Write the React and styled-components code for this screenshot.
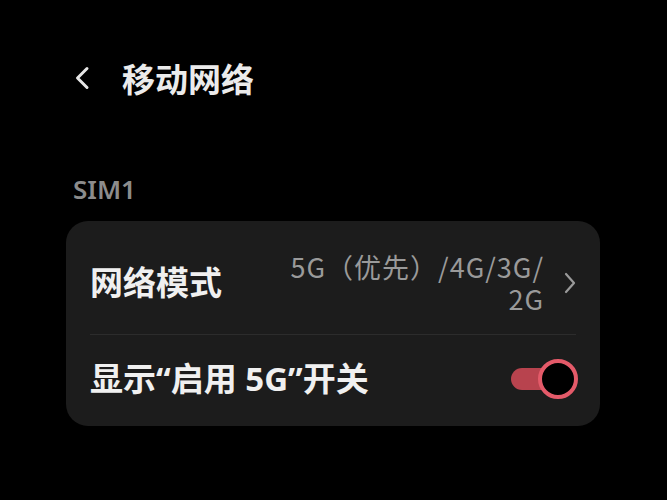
import styled, { createGlobalStyle } from 'styled-components';

const GlobalStyle = createGlobalStyle`
  html, body {
    margin: 0;
    padding: 0;
    background: #000;
  }
  body {
    font-family: "Noto Sans", "Noto Sans CJK SC", sans-serif;
  }
`;

function App() {
  return (
    <Page lang="zh-CN">
      <GlobalStyle />
      <Header>
        <BackButton aria-label="返回">
          <svg width="16" height="24" viewBox="0 0 16 24" fill="none">
            <path d="M13 2.5L3.5 12L13 21.5" stroke="#e6e6e6" strokeWidth="3" strokeLinecap="round" strokeLinejoin="round" />
          </svg>
        </BackButton>
        <Title>移动网络</Title>
      </Header>

      <SectionLabel>SIM1</SectionLabel>

      <Card>
        <Row height={114} offset={10} divider>
          <RowLabel>网络模式</RowLabel>
          <RowEnd>
            <Value>
              5G（优先）/4G/3G/
              <br />
              2G
            </Value>
            <svg width="12" height="22" viewBox="0 0 12 22" fill="none">
              <path d="M2 2L10 11L2 20" stroke="#9a9a9a" strokeWidth="2.2" strokeLinecap="round" strokeLinejoin="round" />
            </svg>
          </RowEnd>
        </Row>
        <Row height={91} offset={-4}>
          <RowLabel>显示“启用 5G”开关</RowLabel>
          <Toggle>
            <Track />
            <Thumb />
          </Toggle>
        </Row>
      </Card>
    </Page>
  );
}

const Page = styled.div`
  display: flex;
  flex-direction: column;
  padding: 50px 67px 0 66px;
  min-height: 500px;
  box-sizing: border-box;
  background: #000;
`;

const Header = styled.header`
  display: flex;
  align-items: center;
  height: 56px;
  padding-left: 8px;
  gap: 32px;
`;

const BackButton = styled.div`
  display: flex;
  align-items: center;
`;

const Title = styled.h1`
  margin: 0;
  font-family: "Noto Sans CJK SC", sans-serif;
  font-size: 33px;
  font-weight: 700;
  color: #ebebeb;
  line-height: 1;
`;

const SectionLabel = styled.div`
  margin: 67px 0 16px 7px;
  font-size: 26px;
  line-height: 32px;
  font-weight: 600;
  color: #8c8c8c;
`;

const Card = styled.div`
  background: #1c1c1c;
  border-radius: 22px;
  padding: 0 24px;
`;

const Row = styled.div`
  display: flex;
  align-items: center;
  justify-content: space-between;
  box-sizing: border-box;
  height: ${(p) => p.height}px;
  padding-top: ${(p) => Math.max(p.offset, 0)}px;
  padding-bottom: ${(p) => Math.max(-p.offset, 0)}px;
  border-bottom: ${(p) => (p.divider ? '1px solid #2c2c2c' : 'none')};
`;

const RowLabel = styled.div`
  font-family: "Noto Sans", "Noto Sans CJK SC", sans-serif;
  font-size: 33px;
  font-weight: 700;
  color: #f0f0f0;
  line-height: 1.2;
`;

const RowEnd = styled.div`
  display: flex;
  align-items: center;
  gap: 20px;
`;

const Value = styled.div`
  font-family: "Noto Sans CJK SC", sans-serif;
  font-size: 27px;
  line-height: 32px;
  letter-spacing: 1px;
  color: #9a9a9a;
  text-align: right;
`;

const Toggle = styled.div`
  position: relative;
  width: 67px;
  height: 42px;
  margin-right: -2px;
`;

const Track = styled.div`
  position: absolute;
  left: 0;
  top: 10px;
  width: 50px;
  height: 22px;
  border-radius: 11px;
  background: #b8434e;
`;

const Thumb = styled.div`
  position: absolute;
  right: 0;
  top: 1px;
  width: 32px;
  height: 32px;
  border-radius: 50%;
  border: 4px solid #e45a69;
  background: #000;
`;

export default App;
